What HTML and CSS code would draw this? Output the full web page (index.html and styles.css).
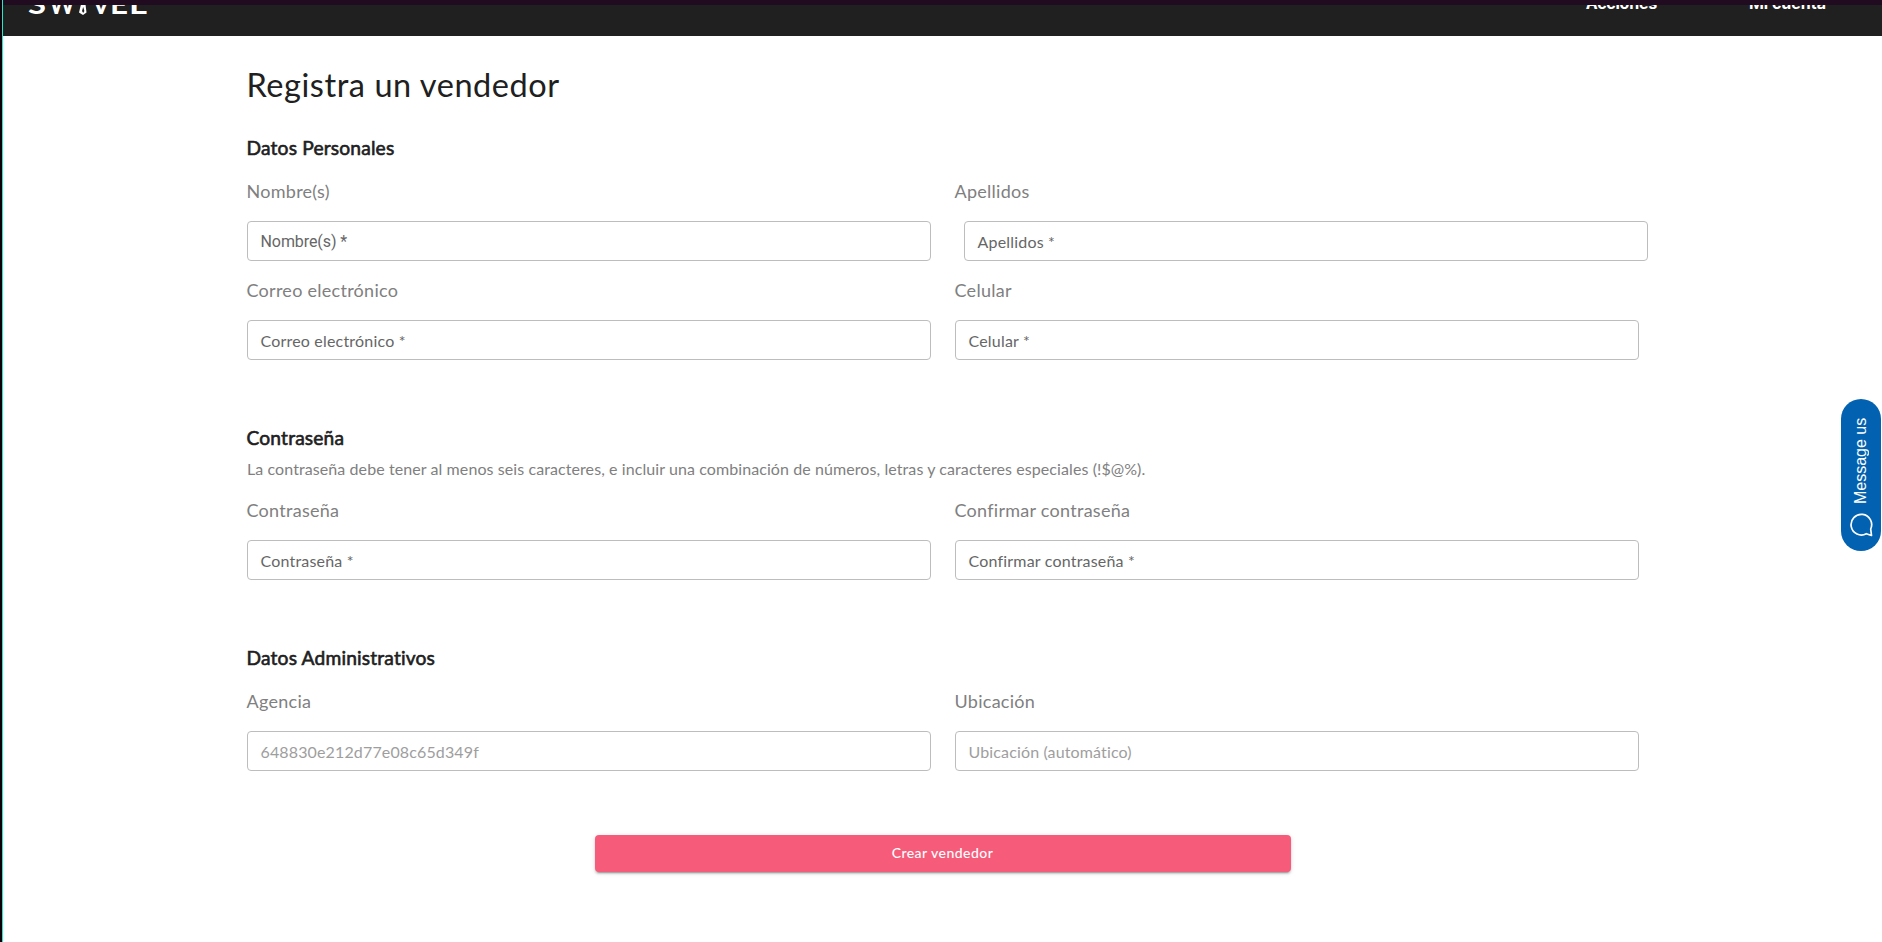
FILE: index.html
```html
<!DOCTYPE html>
<html lang="es">
<head>
<meta charset="utf-8">
<title>Registra un vendedor</title>
<link rel="stylesheet" href="styles.css">
</head>
<body>
<div class="page">
  <header class="navbar">
    <svg class="logo" width="126" height="31" viewBox="0 0 126 31">
      <g class="logo-text">
        <text x="0" y="8.500" textLength="18" lengthAdjust="spacingAndGlyphs">S</text>
        <text x="21" y="8.500" textLength="26" lengthAdjust="spacingAndGlyphs">W</text>
        <text x="64" y="8.500" textLength="18" lengthAdjust="spacingAndGlyphs">V</text>
        <text x="82" y="8.500" textLength="18" lengthAdjust="spacingAndGlyphs">E</text>
        <text x="101" y="8.500" textLength="18" lengthAdjust="spacingAndGlyphs">L</text>
      </g>
      <path d="M54-5h3l1.500 12.500-3.500 2.500-4-2.500z" fill="#fff"/>
      <path d="M55.200 2l1.200 4-1.200 2-1.200-2z" fill="#202020"/>
    </svg>
    <nav class="nav-links">
      <a class="nav-link nav-link-tight">Acciones</a>
      <a class="nav-link">Mi cuenta</a>
    </nav>
  </header>
  <main class="content">
    <h1 class="title">Registra un vendedor</h1>

    <section class="section section-personal">
      <h2 class="heading">Datos Personales</h2>
      <div class="grid">
        <div class="field"><label class="label">Nombre(s)</label><div class="input input-roboto">Nombre(s) *</div></div>
        <div class="field"><label class="label">Apellidos</label><div class="input input-shifted">Apellidos *</div></div>
        <div class="field"><label class="label">Correo electrónico</label><div class="input">Correo electrónico *</div></div>
        <div class="field"><label class="label">Celular</label><div class="input">Celular *</div></div>
      </div>
    </section>

    <section class="section section-password">
      <h2 class="heading">Contraseña</h2>
      <p class="help">La contraseña debe tener al menos seis caracteres, e incluir una combinación de números, letras y caracteres especiales (!$@%).</p>
      <div class="grid">
        <div class="field"><label class="label">Contraseña</label><div class="input">Contraseña *</div></div>
        <div class="field"><label class="label">Confirmar contraseña</label><div class="input">Confirmar contraseña *</div></div>
      </div>
    </section>

    <section class="section section-admin">
      <h2 class="heading">Datos Administrativos</h2>
      <div class="grid">
        <div class="field"><label class="label">Agencia</label><div class="input input-disabled">648830e212d77e08c65d349f</div></div>
        <div class="field"><label class="label">Ubicación</label><div class="input input-disabled">Ubicación (automático)</div></div>
      </div>
    </section>

    <button class="submit">Crear vendedor</button>
  </main>
</div>
<div class="chat">
  <span class="chat-text">Message us</span>
  <svg class="chat-icon" width="24" height="24" viewBox="0 0 24 24" fill="none" stroke="#fff" stroke-width="1.700" stroke-linejoin="round">
    <path d="M22.500 22.500l-.8-6.500a10.300 10.300 0 1 0-4.400 4.700z"/>
  </svg>
</div>
</body>
</html>
```
FILE: styles.css
```css
* { box-sizing: border-box; }
body {
  margin: 0;
  height: 942px;
  overflow: hidden;
  background: #fff;
  border-left: 2px solid #0b030c;
  font-family: Lato, sans-serif;
}
.page {
  height: 942px;
  border-left: 1px solid #2fe3c6;
}
.navbar {
  display: flex;
  justify-content: space-between;
  height: 36px;
  padding: 0 56px 0 25px;
  background: #202020;
  border-top: 5px solid #200b20;
  overflow: hidden;
}
.logo { display: block; overflow: hidden; }
.logo-text {
  font-family: Lato, sans-serif;
  font-size: 26px;
  font-weight: 700;
  fill: #fff;
}
.nav-links {
  display: flex;
  gap: 92px;
  margin-top: -12px;
}
.nav-link {
  color: #fff;
  font-family: Inter, sans-serif;
  font-size: 16px;
  font-weight: 700;
  line-height: 20px;
}
.nav-link-tight { letter-spacing: -0.25px; }
.content {
  display: flex;
  flex-direction: column;
  width: 1392px;
  margin-left: 244px;
  padding-top: 29px;
}
.title {
  margin: 0 0 27px -0.5px;
  color: #202020;
  font-size: 32.5px;
  font-weight: 400;
  line-height: 40px;
  letter-spacing: 0.55px;
}
.section-personal { margin-bottom: 60px; }
.section-password { margin-bottom: 60px; }
.section-admin { margin-bottom: 62px; }
.heading {
  margin: 0 0 0 -0.5px;
  color: #202020;
  font-size: 19.2px;
  font-weight: 400;
  line-height: 32px;
  letter-spacing: 0.17px;
  font-variant-ligatures: none;
  -webkit-text-stroke: 0.6px #202020;
}
.help {
  margin: 0;
  color: #808080;
  font-size: 16px;
  line-height: 29px;
  letter-spacing: 0.085px;
}
.grid {
  display: grid;
  grid-template-columns: 684px 684px;
  column-gap: 24px;
}
.label {
  display: block;
  padding: 10px 0 12px;
  height: 57px;
  margin-left: -0.5px;
  color: #808080;
  font-size: 18px;
  line-height: 35px;
  letter-spacing: 0.27px;
}
.field { height: 99px; }
.input {
  height: 40px;
  padding: 1px 12.5px 0;
  border: 1px solid #bdbdbd;
  border-radius: 4px;
  color: #666;
  font-size: 16px;
  line-height: 38px;
  letter-spacing: 0.19px;
  white-space: nowrap;
}
.input-roboto {
  font-family: Roboto, sans-serif;
  letter-spacing: -0.08px;
}
.input-shifted { margin: 0 -9px 0 9px; }
.input-disabled {
  color: #9e9e9e;
  letter-spacing: 0.14px;
}
.submit {
  align-self: center;
  width: 696px;
  height: 37px;
  margin: 0;
  padding: 0 1px 2px 0;
  border: 0;
  border-radius: 4px;
  background: #f65c7a;
  color: #fff;
  font-family: Lato, sans-serif;
  font-size: 14px;
  font-weight: 500;
  letter-spacing: 0.47px;
  box-shadow: 0 3px 1px -2px rgba(0,0,0,.2), 0 2px 2px rgba(0,0,0,.14), 0 1px 5px rgba(0,0,0,.12);
}
.chat {
  position: fixed;
  right: 1px;
  top: 399px;
  display: flex;
  flex-direction: column;
  align-items: center;
  width: 40px;
  height: 152px;
  padding-top: 19px;
  gap: 9px;
  border-radius: 20px;
  background: #0262b1;
}
.chat-text {
  height: 86px;
  writing-mode: vertical-rl;
  transform: rotate(180deg);
  color: #fff;
  font-family: "Liberation Sans", Arial, sans-serif;
  font-size: 16px;
  line-height: 20px;
  white-space: nowrap;
}
```
